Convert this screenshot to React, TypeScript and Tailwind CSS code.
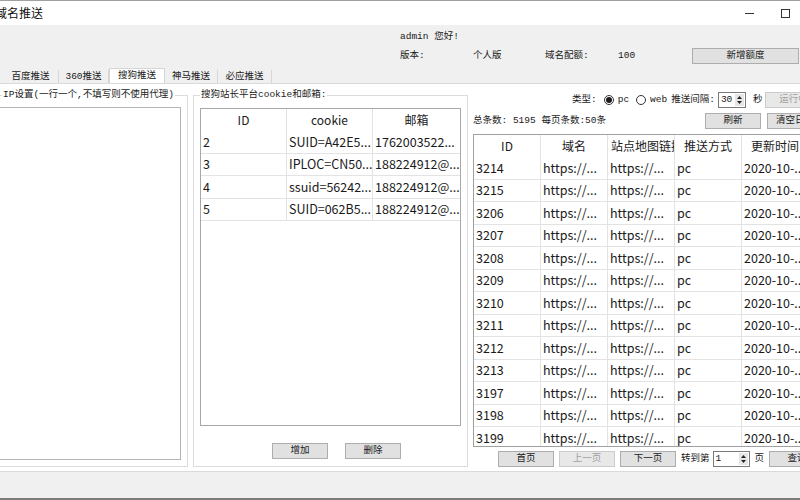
import clsx from "clsx";
import type { ReactNode } from "react";

const ui = "font-['Liberation_Mono','Noto_Sans_CJK_SC',monospace] text-[9.5px] leading-[12px] text-[#1a1a1a] whitespace-nowrap";
const cell = "font-['Noto_Sans_CJK_SC','Noto_Sans',sans-serif] text-[12.5px] text-[#1a1a1a]";

const tabs = [
  { label: "百度推送", w: "w-[56px]" },
  { label: "360推送", w: "w-[50px]" },
  { label: "搜狗推送", w: "w-[56px]", active: true },
  { label: "神马推送", w: "w-[53px]" },
  { label: "必应推送", w: "w-[54px]" },
];

const cookies = [
  { id: "2", cookie: "SUID=A42E5...", mail: "1762003522..." },
  { id: "3", cookie: "IPLOC=CN50...", mail: "188224912@..." },
  { id: "4", cookie: "ssuid=56242...", mail: "188224912@..." },
  { id: "5", cookie: "SUID=062B5...", mail: "188224912@..." },
];

const ids = [3214, 3215, 3206, 3207, 3208, 3209, 3210, 3211, 3212, 3213, 3197, 3198, 3199];

function Btn({ children, className, disabled }: { children: ReactNode; className?: string; disabled?: boolean }) {
  return (
    <div
      className={clsx(
        "h-[16px] shrink-0 flex items-center justify-center border",
        disabled ? "bg-[#e8e8e8] border-[#cccccc] text-[#a0a0a0]" : "bg-[#e1e1e1] border-[#adadad] text-[#1a1a1a]",
        className
      )}
    >
      {children}
    </div>
  );
}

function Spin({ value, className }: { value: string; className?: string }) {
  return (
    <div className={clsx("h-[16px] shrink-0 bg-white border border-[#7a7a7a] flex items-center", className)}>
      <span className="flex-1 pl-[2px]">{value}</span>
      <div className="w-[9px] h-[12px] mr-[1px] bg-[#e6e6e6] flex flex-col items-center justify-center gap-[2px]">
        <svg width="5" height="3" viewBox="0 0 5 3">
          <path d="M0 3 L2.5 0 L5 3 Z" fill="#222" />
        </svg>
        <svg width="5" height="3" viewBox="0 0 5 3">
          <path d="M0 0 L2.5 3 L5 0 Z" fill="#222" />
        </svg>
      </div>
    </div>
  );
}

function Radio({ checked }: { checked?: boolean }) {
  return (
    <span className="w-[10px] h-[10px] shrink-0 rounded-full border border-[#333] bg-white flex items-center justify-center">
      {checked && <span className="w-[6px] h-[6px] rounded-full bg-[#1a1a1a]" />}
    </span>
  );
}

export default function App() {
  return (
    <div className={clsx("w-[800px] h-[500px] overflow-hidden bg-[#f0f0f0] flex flex-col", ui)}>
      {/* title bar */}
      <div className="h-[25px] shrink-0 bg-white border-t border-[#a0a0a0] flex items-center">
        <span className="-ml-[5px] font-['Noto_Sans_CJK_SC',sans-serif] text-[12px] text-[#111]">域名推送</span>
        <div className="ml-auto flex items-center">
          <span className="w-[9px] h-px bg-[#333] mr-[27px]" />
          <span className="w-[9px] h-[9px] border border-[#333] mr-[10px]" />
        </div>
      </div>

      {/* account info */}
      <div className="h-[43px] shrink-0 pl-[400px] pt-[6px]">
        <div className="h-[12px]">admin 您好!</div>
        <div className="mt-[5px] h-[16px] flex items-center">
          <span className="w-[73px]">版本:</span>
          <span className="w-[72px]">个人版</span>
          <span className="w-[73px]">域名配额:</span>
          <span className="w-[74px]">100</span>
          <Btn className="w-[107px]">新增额度</Btn>
        </div>
      </div>

      {/* tabs */}
      <div className="h-[15px] shrink-0 flex items-end pl-[3px]">
        {tabs.map((t) => (
          <div
            key={t.label}
            className={clsx(
              "flex items-center justify-center border-[#d6d6d6]",
              t.w,
              t.active ? "h-[15px] bg-white border-x border-t" : "h-[13px] border-r"
            )}
          >
            {t.label}
          </div>
        ))}
      </div>

      {/* page */}
      <div className="h-[389px] shrink-0 bg-white border-y border-[#dadada] flex">
        <fieldset className="-ml-[5px] mt-[5px] w-[193px] h-[378px] shrink-0 border border-[#dcdcdc] pr-[6px] pb-[6px] flex flex-col">
          <legend className="ml-[6px] px-[1px]">IP设置(一行一个,不填写则不使用代理)</legend>
          <div className="mt-[6px] flex-1 bg-white border border-[#b4b4b4]" />
        </fieldset>

        <fieldset className="ml-[5px] mt-[5px] w-[275px] h-[378px] shrink-0 border border-[#dcdcdc] px-[6px] flex flex-col">
          <legend className="px-[1px]">搜狗站长平台cookie和邮箱:</legend>
          <div className={clsx("mt-[7px] h-[318px] border border-[#a8a8a8] bg-white", cell)}>
            <div className="grid grid-cols-[86px_86px_1fr] h-[22px] text-[12px]">
              <div className="flex items-center justify-center border-r border-[#e3e3e3]">ID</div>
              <div className="flex items-center justify-center border-r border-[#e3e3e3]">cookie</div>
              <div className="flex items-center justify-center">邮箱</div>
            </div>
            {cookies.map((r) => (
              <div key={r.id} className="grid grid-cols-[86px_86px_1fr] h-[22.5px] border-b border-[#e3e3e3]">
                <div className="flex items-center pl-[2px] border-r border-[#e3e3e3]">{r.id}</div>
                <div className="flex items-center pl-[2px] border-r border-[#e3e3e3] overflow-hidden">{r.cookie}</div>
                <div className="flex items-center pl-[2px] overflow-hidden">{r.mail}</div>
              </div>
            ))}
          </div>
          <div className="mt-[17px] flex gap-[17px] pl-[72px]">
            <Btn className="w-[56px]">增加</Btn>
            <Btn className="w-[56px]">删除</Btn>
          </div>
        </fieldset>

        <div className="ml-[2px] w-[350px] shrink-0 pt-[8px] flex flex-col">
          <div className="h-[16px] flex items-center pl-[102px]">
            <span>类型:</span>
            <span className="ml-[7px]"><Radio checked /></span>
            <span className="ml-[4px]">pc</span>
            <span className="ml-[7px]"><Radio /></span>
            <span className="ml-[4px]">web</span>
            <span className="ml-[4px]">推送间隔:</span>
            <Spin value="30" className="ml-[3px] w-[28px]" />
            <span className="ml-[7px]">秒</span>
            <Btn disabled className="ml-[3px] w-[56px]">运行中</Btn>
          </div>
          <div className="mt-[5px] h-[16px] flex items-center pl-[3px]">
            <span>总条数: 5195 每页条数:50条</span>
            <Btn className="ml-auto w-[56px]">刷新</Btn>
            <Btn className="ml-[6px] w-[56px] mr-[-3px]">清空日志</Btn>
          </div>
          <div className={clsx("mt-[5px] ml-[3px] h-[313px] w-[337px] shrink-0 border border-[#a0a0a0] bg-white overflow-hidden", cell)}>
            <div className="grid grid-cols-[67px_67px_67px_67px_67px] h-[22px] text-[12px]">
              <div className="flex items-center justify-center border-r border-[#e3e3e3]">ID</div>
              <div className="flex items-center justify-center border-r border-[#e3e3e3]">域名</div>
              <div className="flex items-center pl-[3px] border-r border-[#e3e3e3] overflow-hidden">站点地图链接</div>
              <div className="flex items-center justify-center border-r border-[#e3e3e3]">推送方式</div>
              <div className="flex items-center justify-center border-r border-[#e3e3e3]">更新时间</div>
            </div>
            {ids.map((id) => (
              <div key={id} className="grid grid-cols-[67px_67px_67px_67px_67px] h-[22.5px] border-b border-[#e3e3e3]">
                <div className="flex items-center pl-[2px] border-r border-[#e3e3e3]">{id}</div>
                <div className="flex items-center pl-[2px] border-r border-[#e3e3e3]">https://...</div>
                <div className="flex items-center pl-[2px] border-r border-[#e3e3e3]">https://...</div>
                <div className="flex items-center pl-[2px] border-r border-[#e3e3e3]">pc</div>
                <div className="flex items-center pl-[2px] overflow-hidden">2020-10-...</div>
              </div>
            ))}
          </div>
          <div className="mt-[4px] h-[16px] flex items-center pl-[28px]">
            <Btn className="w-[56px]">首页</Btn>
            <Btn disabled className="ml-[5px] w-[56px]">上一页</Btn>
            <Btn className="ml-[5px] w-[56px]">下一页</Btn>
            <span className="ml-[5px]">转到第</span>
            <Spin value="1" className="ml-[3px] w-[37px]" />
            <span className="ml-[5px]">页</span>
            <Btn className="ml-[5px] w-[56px]">查询</Btn>
          </div>
        </div>
      </div>

      <div className="flex-1 border-b-2 border-[#7c7c7c]" />
    </div>
  );
}
